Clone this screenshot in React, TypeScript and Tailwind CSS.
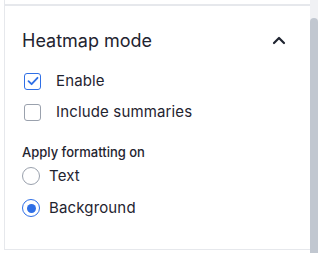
import { useState } from "react";

function Checkbox({ checked, label, onToggle }: { checked: boolean; label: string; onToggle: () => void }) {
  return (
    <label className="flex h-6 items-center cursor-pointer" onClick={onToggle}>
      <span
        className={`ml-[2px] flex h-[17px] w-[17px] items-center justify-center rounded-[3px] border-[1.5px] ${
          checked ? "border-[#2f6fe6]" : "border-[#9aa1ad]"
        }`}
      >
        {checked && (
          <svg width="12" height="10" viewBox="0 0 12 10" fill="none">
            <path d="M1.5 5.2 L4.6 8.2 L10.5 1.8" stroke="#2f6fe6" strokeWidth="1.8" strokeLinecap="round" strokeLinejoin="round" />
          </svg>
        )}
      </span>
      <span className="ml-[15px] text-[15px] tracking-[0.15px] text-[#1f2430]">{label}</span>
    </label>
  );
}

function Radio({ checked, label, onPick }: { checked: boolean; label: string; onPick: () => void }) {
  return (
    <label className="flex h-6 items-center cursor-pointer" onClick={onPick}>
      <span
        className={`flex h-[18px] w-[18px] items-center justify-center rounded-full border-[1.5px] ${
          checked ? "border-[#2f6fe6]" : "border-[#9aa1ad]"
        }`}
      >
        {checked && <span className="h-[9px] w-[9px] rounded-full bg-[#2f6fe6]" />}
      </span>
      <span className="ml-[9px] text-[15px] tracking-[0.15px] text-[#1f2430]">{label}</span>
    </label>
  );
}

export default function App() {
  const [enable, setEnable] = useState(true);
  const [summaries, setSummaries] = useState(false);
  const [target, setTarget] = useState<"text" | "background">("background");

  return (
    <div className="flex h-[253px] w-[318px] overflow-hidden bg-white font-['Inter',sans-serif]">
      {/* panel */}
      <div className="w-[310px] pl-1">
        <div className="h-[250px] border-l border-b border-[#e6e8ec] pt-1">
          <div className="h-[245px] border-t-2 border-[#e6e8ec] pl-[17px] pr-[24px] pt-[22px]">
            <div className="flex h-6 items-center justify-between">
              <h2 className="text-[18px] font-normal text-[#1f2430]">Heatmap mode</h2>
              <svg width="14" height="9" viewBox="0 0 14 9" fill="none">
                <path d="M2 7 L7 2 L12 7" stroke="#1f2430" strokeWidth="2.2" strokeLinecap="round" strokeLinejoin="round" />
              </svg>
            </div>

            <div className="mt-[17px]">
              <Checkbox checked={enable} label="Enable" onToggle={() => setEnable(!enable)} />
            </div>
            <div className="mt-[7px]">
              <Checkbox checked={summaries} label="Include summaries" onToggle={() => setSummaries(!summaries)} />
            </div>

            <p className="mt-[19px] h-[18px] text-[13px] font-medium leading-[18px] text-[#1f2430]">Apply formatting on</p>
            <div className="mt-[3px]">
              <Radio checked={target === "text"} label="Text" onPick={() => setTarget("text")} />
            </div>
            <div className="mt-[8px]">
              <Radio checked={target === "background"} label="Background" onPick={() => setTarget("background")} />
            </div>
          </div>
        </div>
      </div>

      {/* scrollbar */}
      <div className="flex w-2 flex-col bg-[#f0f1f4]">
        <div className="h-[18px]" />
        <div className="flex-1 rounded-t-full bg-[#c1c7d0]" />
      </div>
    </div>
  );
}
